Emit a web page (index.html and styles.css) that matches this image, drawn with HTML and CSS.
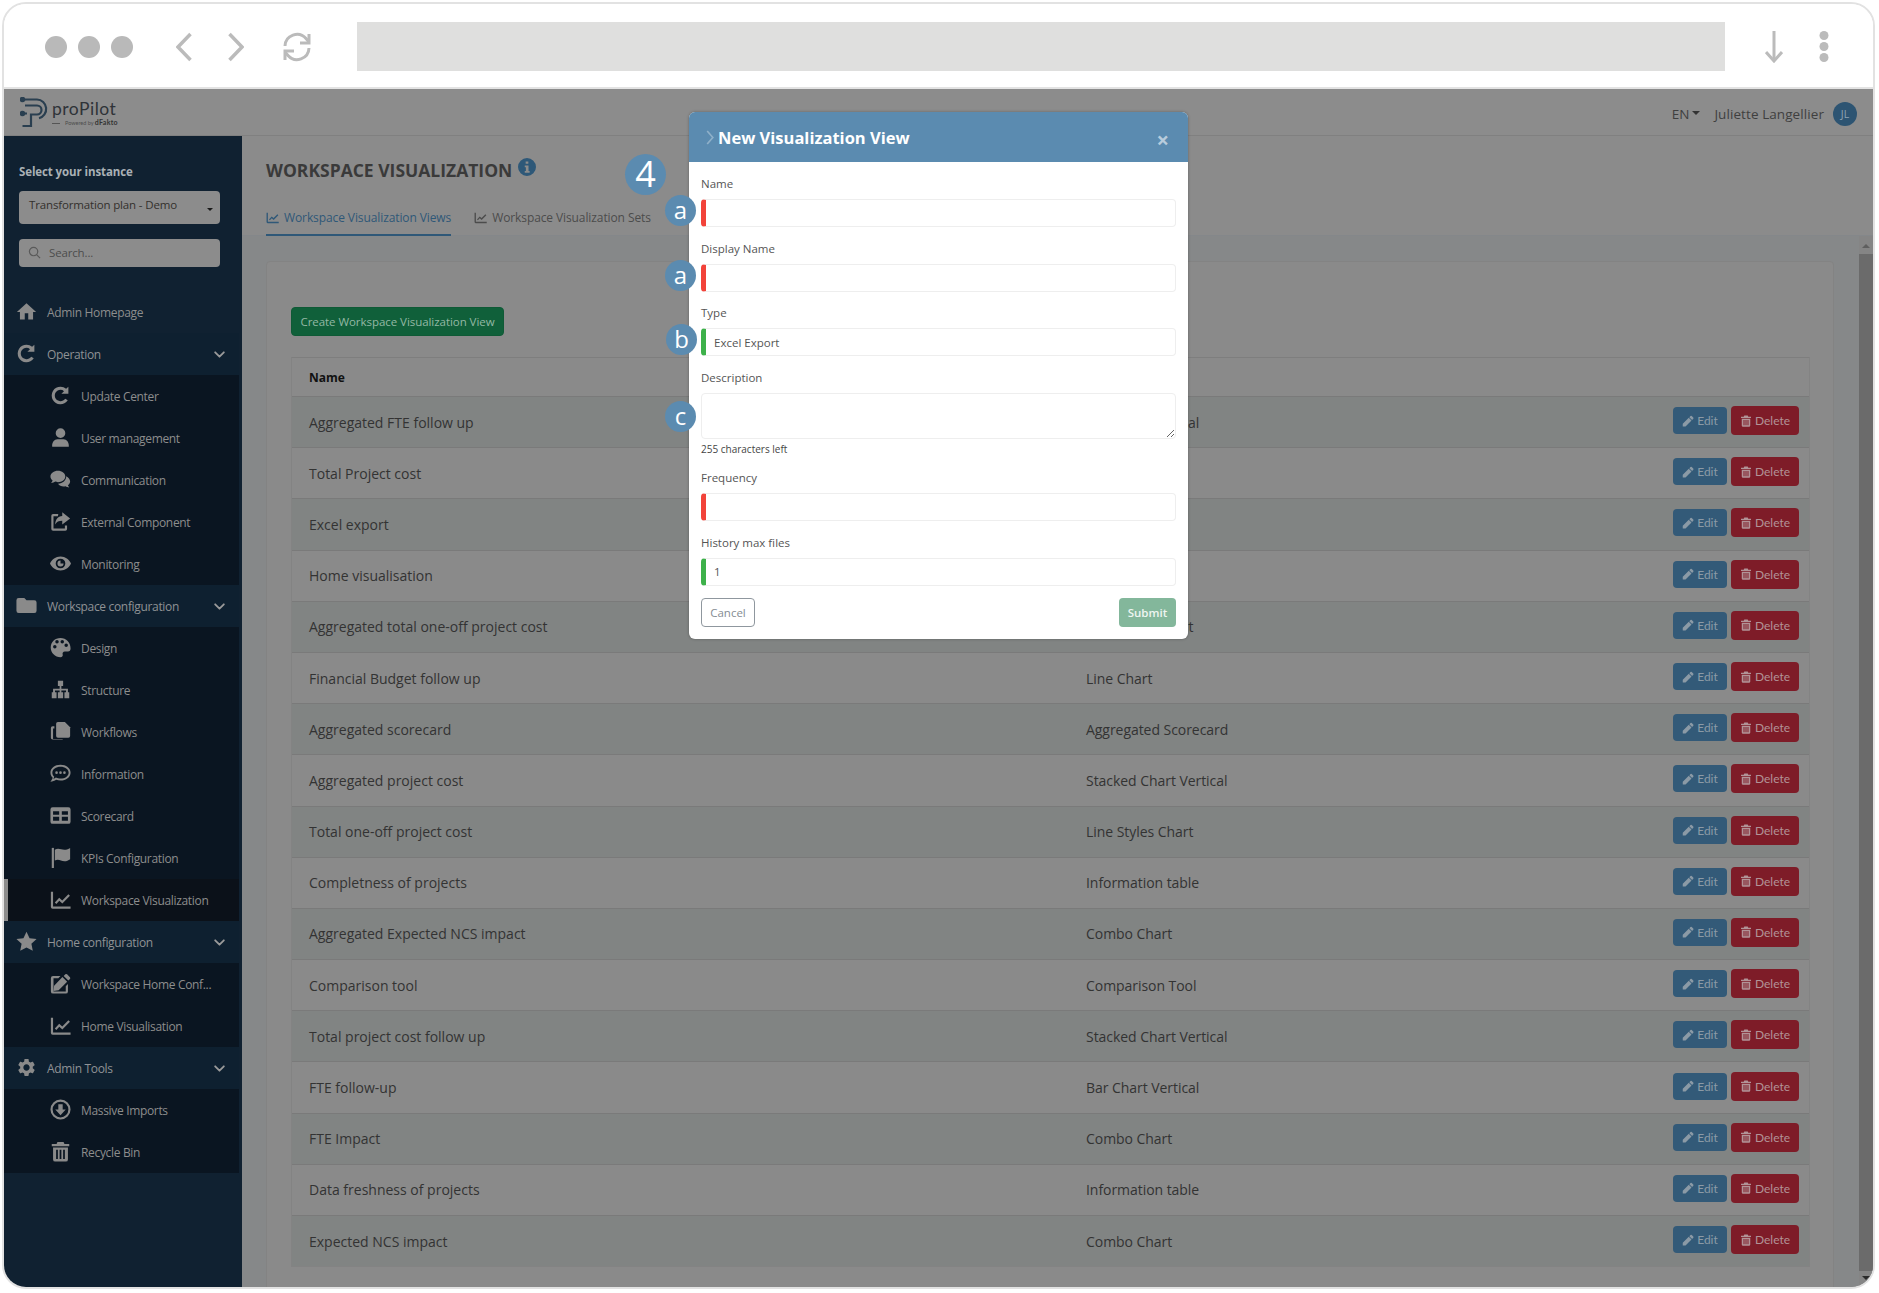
FILE: index.html
```html
<!DOCTYPE html>
<html lang="en">
<head>
<meta charset="utf-8">
<title>Workspace Visualization</title>
<link rel="stylesheet" href="styles.css">
</head>
<body>
<svg class="defs" aria-hidden="true">
  <symbol id="i-home" viewBox="0 0 24 24"><path d="M10 21v-7h4v7h5.500v-8.500H23L12 2.500 1 12.500h3.500V21z"/></symbol>
  <symbol id="i-redo" viewBox="0 0 24 24"><path d="M12 5.500a6.500 6.500 0 1 0 5.400 10.100l2.900 1.900A10 10 0 1 1 12 2c2.500 0 4.700.9 6.400 2.400L21 2v8h-8l3-3a6.500 6.500 0 0 0-4-1.500z"/></symbol>
  <symbol id="i-user" viewBox="0 0 24 24"><path d="M12 12.500a5.500 5.500 0 1 0 0-11 5.500 5.500 0 0 0 0 11zM2.500 22.500c-.5-5 2.500-8.500 6-8.500h7c3.500 0 6.500 3.500 6 8.500z"/></symbol>
  <symbol id="i-comments" viewBox="0 0 24 24"><path d="M9 2C4.500 2 .5 4.800.5 8.500c0 2 1.100 3.600 2.500 4.700-.3 1-1 2-1.800 2.800 2 0 3.600-.8 4.800-1.600 1 .3 2 .6 3 .6 4.700 0 8.500-3 8.500-6.500S13.700 2 9 2z"/><path d="M18.500 8.200c.2 4.600-4 8.300-9.300 8.600 1.300 2 3.800 3.200 6.300 3.200.8 0 1.500-.1 2.300-.3 1.100.7 2.500 1.300 4.200 1.300-.7-.7-1.300-1.600-1.500-2.400 1.400-1 2.500-2.600 2.500-4.300 0-2.700-1.900-5-4.500-6.100z"/></symbol>
  <symbol id="i-share" viewBox="0 0 24 24"><path d="M14 1.500l9 7-9 7v-4.300c-4 0-6.500 1-8 4.300 0-5.500 3-9.300 8-9.700z"/><path d="M9.500 3.500H3.500a2 2 0 0 0-2 2v15a2 2 0 0 0 2 2h14a2 2 0 0 0 2-2v-4h-2.500v3.500h-13v-14h5z"/></symbol>
  <symbol id="i-eye" viewBox="0 0 24 24"><path fill-rule="evenodd" d="M12 4C6.500 4 2 7.500 0 12c2 4.500 6.500 8 12 8s10-3.500 12-8c-2-4.500-6.500-8-12-8zm0 2.500a5.500 5.500 0 1 1 0 11 5.500 5.500 0 0 1 0-11zm0 2a3.500 3.500 0 1 0 3.500 3.500H12z"/></symbol>
  <symbol id="i-folder" viewBox="0 0 24 24"><path d="M9.500 3.500H3a2.500 2.500 0 0 0-2.500 2.500v12A2.500 2.500 0 0 0 3 20.500h18a2.500 2.500 0 0 0 2.500-2.500V8.500A2.500 2.500 0 0 0 21 6h-9z"/></symbol>
  <symbol id="i-palette" viewBox="0 0 24 24"><path fill-rule="evenodd" d="M12 1C5.500 1 .8 5.800.8 12S5.800 23 12 23c2 0 3-1.300 2.500-3-.5-2 .5-3.500 2.500-3.500h3.500c2 0 3-1.500 3-3.500C23.500 6 18.500 1 12 1zM5.500 13a2 2 0 1 1 0-4 2 2 0 0 1 0 4zM8 7.500a2 2 0 1 1 0-4 2 2 0 0 1 0 4zm6 0a2 2 0 1 1 0-4 2 2 0 0 1 0 4zm4.500 4a2 2 0 1 1 0-4 2 2 0 0 1 0 4z"/></symbol>
  <symbol id="i-sitemap" viewBox="0 0 24 24"><path d="M9 2h6v6h-2v3h7.500v4H22v7h-5.500v-7h1.800v-2H13v2h2v7H9v-7h2v-2H5.700v2h1.800v7H2v-7h1.500v-4H11V8H9z"/></symbol>
  <symbol id="i-copy" viewBox="0 0 24 24"><path d="M9 1h8l6 6v10a2 2 0 0 1-2 2H9a2 2 0 0 1-2-2V3a2 2 0 0 1 2-2z"/><path d="M5 6v2.500H3.500v12h11V21H3a2 2 0 0 1-2-2V8a2 2 0 0 1 2-2z"/></symbol>
  <symbol id="i-chat" viewBox="0 0 24 24"><path fill-rule="evenodd" d="M12 2C5.600 2 .5 6 .5 11c0 2.200 1 4.200 2.600 5.800-.5 1.700-1.600 3.200-2.800 4.700 2.700-.2 5-1 6.700-2.300 1.500.5 3.200.8 5 .8 6.400 0 11.500-4 11.500-9S18.400 2 12 2zm0 2.200c5.200 0 9.300 3 9.300 6.800s-4.100 6.800-9.300 6.800c-2 0-3.300-.4-5.200-1.100-1 .8-1.800 1.300-3 1.600.6-1 .9-2 1-3C3.700 14.800 2.700 13 2.700 11c0-3.800 4.100-6.800 9.300-6.800zM7.500 9.500a1.500 1.500 0 1 0 0 3 1.500 1.500 0 0 0 0-3zm4.500 0a1.500 1.500 0 1 0 0 3 1.500 1.500 0 0 0 0-3zm4.500 0a1.500 1.500 0 1 0 0 3 1.500 1.500 0 0 0 0-3z"/></symbol>
  <symbol id="i-table" viewBox="0 0 24 24"><path fill-rule="evenodd" d="M3 2.500h18A2.500 2.500 0 0 1 23.500 5v14a2.500 2.500 0 0 1-2.500 2.500H3A2.500 2.500 0 0 1 .5 19V5A2.500 2.500 0 0 1 3 2.500zM3.500 7v4h7V7zm10 0v4h7V7zm-10 6.500v4.500h7v-4.500zm10 0v4.500h7v-4.500z"/></symbol>
  <symbol id="i-flag" viewBox="0 0 24 24"><path d="M2 1h2.500v23H2z"/><path d="M5.500 3c5-2.500 8 1 12.500 0 2-.4 4-1.300 5-2v13c-2 1.500-4 2.300-6.500 2.300-4 0-6.500-3-11-.8z"/></symbol>
  <symbol id="i-chart" viewBox="0 0 24 24"><path d="M1 3h2.500v17H23.500v2.500H3a2 2 0 0 1-2-2z"/><path d="M5.500 15.500l5-5.500 3.500 3L21 6l1.800 1.800-8.700 8.700-3.500-3-3.300 3.600z"/></symbol>
  <symbol id="i-star" viewBox="0 0 24 24"><path d="M12 .8l3.500 7.400 8 1-5.900 5.500 1.600 8L12 18.800l-7.200 3.900 1.600-8L.5 9.200l8-1z"/></symbol>
  <symbol id="i-edit" viewBox="0 0 24 24"><path d="M19.500 1.500l3.300 3.300a1.500 1.500 0 0 1 0 2L21 8.700 15.600 3.300l1.900-1.800a1.500 1.500 0 0 1 2 0zM14.200 4.700l5.400 5.400-9.700 9.700-6 .8.800-6z"/><path d="M3.500 3.500H12L9.500 6H4v15h14v-6l2.500-2.500V21a2.500 2.500 0 0 1-2.500 2.500H3.500A2.500 2.500 0 0 1 1 21V6a2.500 2.500 0 0 1 2.500-2.500z"/></symbol>
  <symbol id="i-gear" viewBox="0 0 24 24"><path fill-rule="evenodd" d="M19.140 12.940c.04-.3.060-.61.060-.94 0-.32-.020-.64-.070-.94l2.030-1.580c.18-.14.230-.41.120-.61l-1.920-3.320c-.12-.22-.37-.29-.59-.22l-2.390.96c-.5-.38-1.030-.7-1.620-.94l-.36-2.540c-.04-.24-.24-.41-.48-.41h-3.840c-.24 0-.43.17-.47.41l-.36 2.540c-.59.24-1.130.57-1.620.94l-2.390-.96c-.22-.08-.47 0-.59.22L2.740 8.870c-.12.21-.08.47.12.61l2.030 1.580c-.05.3-.09.63-.09.94s.02.64.07.94l-2.030 1.580c-.18.14-.23.41-.12.61l1.920 3.320c.12.22.37.29.59.22l2.390-.96c.5.38 1.030.7 1.620.94l.36 2.540c.05.24.24.41.48.41h3.840c.24 0 .44-.17.47-.41l.36-2.540c.59-.24 1.130-.56 1.620-.94l2.390.96c.22.08.47 0 .59-.22l1.920-3.320c.12-.22.07-.47-.12-.61l-2.010-1.580zM12 15.600c-1.980 0-3.600-1.620-3.600-3.600s1.620-3.600 3.600-3.600 3.600 1.620 3.600 3.600-1.620 3.600-3.600 3.600z"/></symbol>
  <symbol id="i-import" viewBox="0 0 24 24"><path fill-rule="evenodd" d="M12 .5a11.500 11.500 0 1 1 0 23 11.500 11.500 0 0 1 0-23zm0 2.500a9 9 0 1 0 0 18 9 9 0 0 0 0-18zm-2.500 3h5v6H18l-6 6.500L6 12h3.500z"/></symbol>
  <symbol id="i-trash" viewBox="0 0 24 24"><path fill-rule="evenodd" d="M8.500 1h7l1 2.500H22V6H2V3.500h5.500zM3.500 7.500h17V21a2.500 2.500 0 0 1-2.500 2.500H6A2.500 2.500 0 0 1 3.500 21zM7 10v10.500h2V10zm4 0v10.500h2V10zm4 0v10.500h2V10z"/></symbol>
  <symbol id="i-pencil" viewBox="0 0 24 24"><path d="M1.500 17.500V23H7L19 11l-5.500-5.500zM22.500 7.500a1.800 1.800 0 0 0 0-2.500l-3-3a1.800 1.800 0 0 0-2.500 0l-2.300 2.300 5.500 5.500z"/></symbol>
  <symbol id="i-chevdown" viewBox="0 0 24 24"><path d="M4 8l8 8 8-8" fill="none" stroke="currentColor" stroke-width="3.400" stroke-linecap="round" stroke-linejoin="round"/></symbol>
  <symbol id="i-info" viewBox="0 0 24 24"><path fill-rule="evenodd" d="M12 0a12 12 0 1 1 0 24 12 12 0 0 1 0-24zm-1.800 4.500v3.200h3.600V4.500zM9 10v2.200h1.500v5H9v2.300h6.500v-2.300H14V10z"/></symbol>
</svg>

<div class="window">
  <div class="chrome">
    <span class="dot"></span><span class="dot"></span><span class="dot"></span>
    <svg class="ch-back" viewBox="0 0 16 30"><path d="M14.500 2L2 15l12.500 13" fill="none" stroke="#bbb" stroke-width="3.500"/></svg>
    <svg class="ch-fwd" viewBox="0 0 16 30"><path d="M1.500 2L14 15 1.500 28" fill="none" stroke="#bbb" stroke-width="3.500"/></svg>
    <svg class="ch-reload" viewBox="0 0 30 30" fill="none" stroke="#bbb" stroke-width="3"><path d="M3 14a12 12 0 0 1 21-7.500L27 10"/><path d="M27 2v9h-9"/><path d="M27 16a12 12 0 0 1-21 7.500L3 20"/><path d="M3 28v-9h9"/></svg>
    <div class="urlbar"></div>
    <svg class="ch-down" viewBox="0 0 18 32" fill="none" stroke="#bbb" stroke-width="3"><path d="M9 0v30"/><path d="M1 21l8 9 8-9"/></svg>
    <svg class="ch-menu" viewBox="0 0 10 31" fill="#bbb"><circle cx="5" cy="4.500" r="4.500"/><circle cx="5" cy="15.500" r="4.500"/><circle cx="5" cy="26.500" r="4.500"/></svg>
  </div>

  <header class="topbar">
    <div class="brand">
      <svg class="brand-mark" viewBox="0 0 28 31" fill="none" stroke="#2a3f50" stroke-width="2.200"><path d="M2 2.500h15a9.500 9.500 0 0 1 2 18.700"/><path d="M5 8.500h12a4.500 4.500 0 0 1 0 9h-6V29H2.500"/><path d="M2 16.500h5"/><circle cx="2.500" cy="2.500" r="1.700" fill="#2a3f50"/><circle cx="2.500" cy="16.500" r="1.700" fill="#2a3f50"/></svg>
      <div class="brand-text">
        <span class="brand-name">proPilot</span>
        <span class="brand-sub"><i class="brand-rule"></i>Powered by <b>dFakto</b></span>
      </div>
    </div>
    <div class="user">
      <span class="lang">EN</span><span class="caret"></span>
      <span class="user-name">Juliette Langellier</span>
      <span class="avatar">JL</span>
    </div>
  </header>

  <div class="body">
    <aside class="sidebar">
      <div class="inst-label">Select your instance</div>
      <div class="inst-select">Transformation plan - Demo<span class="caret dark"></span></div>
      <div class="inst-search">
        <svg class="search-ic" viewBox="0 0 14 14" fill="none" stroke="#5a5a5a" stroke-width="1.300"><circle cx="6" cy="6" r="4.500"/><path d="M9.500 9.500L13 13"/></svg>
        Search...
      </div>
      <nav class="menu">
        <a class="item top"><svg class="ic"><use href="#i-home"/></svg>Admin Homepage</a>
        <a class="item group"><svg class="ic"><use href="#i-redo"/></svg>Operation<svg class="chev"><use href="#i-chevdown"/></svg></a>
        <a class="item sub"><svg class="ic"><use href="#i-redo"/></svg>Update Center</a>
        <a class="item sub"><svg class="ic"><use href="#i-user"/></svg>User management</a>
        <a class="item sub"><svg class="ic"><use href="#i-comments"/></svg>Communication</a>
        <a class="item sub"><svg class="ic"><use href="#i-share"/></svg>External Component</a>
        <a class="item sub"><svg class="ic"><use href="#i-eye"/></svg>Monitoring</a>
        <a class="item group"><svg class="ic"><use href="#i-folder"/></svg>Workspace configuration<svg class="chev"><use href="#i-chevdown"/></svg></a>
        <a class="item sub"><svg class="ic"><use href="#i-palette"/></svg>Design</a>
        <a class="item sub"><svg class="ic"><use href="#i-sitemap"/></svg>Structure</a>
        <a class="item sub"><svg class="ic"><use href="#i-copy"/></svg>Workflows</a>
        <a class="item sub"><svg class="ic"><use href="#i-chat"/></svg>Information</a>
        <a class="item sub"><svg class="ic"><use href="#i-table"/></svg>Scorecard</a>
        <a class="item sub"><svg class="ic"><use href="#i-flag"/></svg>KPIs Configuration</a>
        <a class="item sub active"><svg class="ic"><use href="#i-chart"/></svg>Workspace Visualization</a>
        <a class="item group"><svg class="ic"><use href="#i-star"/></svg>Home configuration<svg class="chev"><use href="#i-chevdown"/></svg></a>
        <a class="item sub"><svg class="ic"><use href="#i-edit"/></svg>Workspace Home Conf...</a>
        <a class="item sub"><svg class="ic"><use href="#i-chart"/></svg>Home Visualisation</a>
        <a class="item group"><svg class="ic"><use href="#i-gear"/></svg>Admin Tools<svg class="chev"><use href="#i-chevdown"/></svg></a>
        <a class="item sub"><svg class="ic"><use href="#i-import"/></svg>Massive Imports</a>
        <a class="item sub"><svg class="ic"><use href="#i-trash"/></svg>Recycle Bin</a>
      </nav>
    </aside>

    <main class="main">
      <div class="page-head">
        <h1 class="page-title">WORKSPACE VISUALIZATION<svg class="info"><use href="#i-info"/></svg></h1>
        <div class="tabs">
          <a class="tab on"><svg class="tab-ic"><use href="#i-chart"/></svg>Workspace Visualization Views</a>
          <a class="tab"><svg class="tab-ic"><use href="#i-chart"/></svg>Workspace Visualization Sets</a>
        </div>
      </div>
      <div class="scroller">
        <div class="content">
          <section class="panel">
            <button class="create">Create Workspace Visualization View</button>
            <div class="table">
              <div class="row head"><span class="c-name">Name</span></div>
              <div class="row"><span class="c-name">Aggregated FTE follow up</span><span class="c-type">Bar Chart Vertical</span><span class="acts"><button class="edit"><svg class="b-ic"><use href="#i-pencil"/></svg>Edit</button><button class="del"><svg class="b-ic"><use href="#i-trash"/></svg>Delete</button></span></div>
              <div class="row"><span class="c-name">Total Project cost</span><span class="c-type">Line Chart</span><span class="acts"><button class="edit"><svg class="b-ic"><use href="#i-pencil"/></svg>Edit</button><button class="del"><svg class="b-ic"><use href="#i-trash"/></svg>Delete</button></span></div>
              <div class="row"><span class="c-name">Excel export</span><span class="c-type">Excel Export</span><span class="acts"><button class="edit"><svg class="b-ic"><use href="#i-pencil"/></svg>Edit</button><button class="del"><svg class="b-ic"><use href="#i-trash"/></svg>Delete</button></span></div>
              <div class="row"><span class="c-name">Home visualisation</span><span class="c-type">Line Chart</span><span class="acts"><button class="edit"><svg class="b-ic"><use href="#i-pencil"/></svg>Edit</button><button class="del"><svg class="b-ic"><use href="#i-trash"/></svg>Delete</button></span></div>
              <div class="row"><span class="c-name">Aggregated total one-off project cost</span><span class="c-type">Line Styles Chart</span><span class="acts"><button class="edit"><svg class="b-ic"><use href="#i-pencil"/></svg>Edit</button><button class="del"><svg class="b-ic"><use href="#i-trash"/></svg>Delete</button></span></div>
              <div class="row"><span class="c-name">Financial Budget follow up</span><span class="c-type">Line Chart</span><span class="acts"><button class="edit"><svg class="b-ic"><use href="#i-pencil"/></svg>Edit</button><button class="del"><svg class="b-ic"><use href="#i-trash"/></svg>Delete</button></span></div>
              <div class="row"><span class="c-name">Aggregated scorecard</span><span class="c-type">Aggregated Scorecard</span><span class="acts"><button class="edit"><svg class="b-ic"><use href="#i-pencil"/></svg>Edit</button><button class="del"><svg class="b-ic"><use href="#i-trash"/></svg>Delete</button></span></div>
              <div class="row"><span class="c-name">Aggregated project cost</span><span class="c-type">Stacked Chart Vertical</span><span class="acts"><button class="edit"><svg class="b-ic"><use href="#i-pencil"/></svg>Edit</button><button class="del"><svg class="b-ic"><use href="#i-trash"/></svg>Delete</button></span></div>
              <div class="row"><span class="c-name">Total one-off project cost</span><span class="c-type">Line Styles Chart</span><span class="acts"><button class="edit"><svg class="b-ic"><use href="#i-pencil"/></svg>Edit</button><button class="del"><svg class="b-ic"><use href="#i-trash"/></svg>Delete</button></span></div>
              <div class="row"><span class="c-name">Completness of projects</span><span class="c-type">Information table</span><span class="acts"><button class="edit"><svg class="b-ic"><use href="#i-pencil"/></svg>Edit</button><button class="del"><svg class="b-ic"><use href="#i-trash"/></svg>Delete</button></span></div>
              <div class="row"><span class="c-name">Aggregated Expected NCS impact</span><span class="c-type">Combo Chart</span><span class="acts"><button class="edit"><svg class="b-ic"><use href="#i-pencil"/></svg>Edit</button><button class="del"><svg class="b-ic"><use href="#i-trash"/></svg>Delete</button></span></div>
              <div class="row"><span class="c-name">Comparison tool</span><span class="c-type">Comparison Tool</span><span class="acts"><button class="edit"><svg class="b-ic"><use href="#i-pencil"/></svg>Edit</button><button class="del"><svg class="b-ic"><use href="#i-trash"/></svg>Delete</button></span></div>
              <div class="row"><span class="c-name">Total project cost follow up</span><span class="c-type">Stacked Chart Vertical</span><span class="acts"><button class="edit"><svg class="b-ic"><use href="#i-pencil"/></svg>Edit</button><button class="del"><svg class="b-ic"><use href="#i-trash"/></svg>Delete</button></span></div>
              <div class="row"><span class="c-name">FTE follow-up</span><span class="c-type">Bar Chart Vertical</span><span class="acts"><button class="edit"><svg class="b-ic"><use href="#i-pencil"/></svg>Edit</button><button class="del"><svg class="b-ic"><use href="#i-trash"/></svg>Delete</button></span></div>
              <div class="row"><span class="c-name">FTE Impact</span><span class="c-type">Combo Chart</span><span class="acts"><button class="edit"><svg class="b-ic"><use href="#i-pencil"/></svg>Edit</button><button class="del"><svg class="b-ic"><use href="#i-trash"/></svg>Delete</button></span></div>
              <div class="row"><span class="c-name">Data freshness of projects</span><span class="c-type">Information table</span><span class="acts"><button class="edit"><svg class="b-ic"><use href="#i-pencil"/></svg>Edit</button><button class="del"><svg class="b-ic"><use href="#i-trash"/></svg>Delete</button></span></div>
              <div class="row"><span class="c-name">Expected NCS impact</span><span class="c-type">Combo Chart</span><span class="acts"><button class="edit"><svg class="b-ic"><use href="#i-pencil"/></svg>Edit</button><button class="del"><svg class="b-ic"><use href="#i-trash"/></svg>Delete</button></span></div>
            </div>
          </section>
        </div>
        <div class="scrollbar"><i class="arrow up"></i><i class="thumb"></i><i class="arrow down"></i></div>
      </div>
    </main>
  </div>

  <form class="modal">
    <div class="modal-head">
      <svg class="modal-chev" viewBox="0 0 8 16"><path d="M1 1l6 7-6 7" fill="none" stroke="#8fb0c9" stroke-width="1.800"/></svg>
      <span class="modal-title">New Visualization View</span>
      <span class="modal-close">×</span>
    </div>
    <div class="modal-body">
      <div class="field"><label class="lbl">Name</label><input class="inp bad"></div>
      <div class="field"><label class="lbl">Display Name</label><input class="inp bad"></div>
      <div class="field"><label class="lbl">Type</label><input class="inp ok" value="Excel Export"></div>
      <div class="field tight"><label class="lbl">Description</label><textarea class="area"></textarea><div class="hint">255 characters left</div></div>
      <div class="field"><label class="lbl">Frequency</label><input class="inp bad"></div>
      <div class="field last"><label class="lbl">History max files</label><input class="inp ok" value="1"></div>
      <div class="modal-foot"><button type="button" class="cancel">Cancel</button><button type="button" class="submit">Submit</button></div>
    </div>
  </form>

  <span class="badge big b-four">4</span>
  <span class="badge b-a1">a</span>
  <span class="badge b-a2">a</span>
  <span class="badge b-b">b</span>
  <span class="badge b-c">c</span>
</div>
</body>
</html>
```
FILE: styles.css
```css
* { box-sizing: border-box; }
html, body { margin: 0; padding: 0; height: 100%; background: #fff; overflow: hidden; }
body { font-family: "Open Sans", "Noto Sans", sans-serif; color: #333; }
.defs { position: absolute; width: 0; height: 0; }

.window {
  position: relative;
  height: 1287px;
  margin: 2px 4px 0 2px;
  border: 2px solid #e2e2e2;
  border-radius: 24px;
  overflow: hidden;
  display: flex;
  flex-direction: column;
  background: #fff;
}

/* browser chrome */
.chrome {
  flex: none;
  height: 85px;
  padding: 4px 44px 2px 41px;
  display: flex;
  align-items: center;
  background: #fff;
  border-bottom: 2px solid #e3e3e3;
}
.dot { width: 22px; height: 22px; border-radius: 50%; background: #b9b9b9; margin-right: 11px; flex: none; }
.ch-back { width: 16px; height: 30px; margin-left: 32px; flex: none; }
.ch-fwd { width: 16px; height: 30px; margin-left: 36px; flex: none; }
.ch-reload { width: 30px; height: 30px; margin-left: 38px; flex: none; }
.urlbar { flex: 1; height: 49px; margin-left: 45px; background: #dfdfde; }
.ch-down { width: 18px; height: 32px; margin-left: 40px; flex: none; }
.ch-menu { width: 10px; height: 31px; margin-left: 36px; flex: none; }

/* top bar */
.topbar {
  flex: none;
  height: 47px;
  display: flex;
  align-items: center;
  justify-content: space-between;
  background: #8c8c8c;
  border-bottom: 1px solid #808080;
  padding: 0 16px;
}
.brand { display: flex; align-items: center; gap: 4px; }
.brand-mark { width: 28px; height: 31px; }
.brand-text { display: flex; flex-direction: column; margin-top: 2px; }
.brand-name { font-family: Lato, sans-serif; font-size: 17.500px; line-height: 19px; letter-spacing: .5px; color: #2f3338; }
.brand-sub { font-family: Lato, sans-serif; font-size: 5.500px; line-height: 9px; color: #4c4c4c; }
.brand-sub b { font-size: 7px; color: #333; letter-spacing: .3px; }
.brand-rule { display: inline-block; width: 8px; height: 1px; background: #555; vertical-align: middle; margin-right: 5px; }
.user { display: flex; align-items: center; margin-top: 3px; font-size: 13.500px; color: #3f3f3f; }
.lang { font-size: 13.500px; }
.caret { width: 0; height: 0; border: 4px solid transparent; border-top-color: #333; border-bottom: 0; margin: -2px 0 0 3px; }
.user-name { margin: 0 9px 0 14px; letter-spacing: .08px; }
.avatar { width: 24px; height: 24px; border-radius: 50%; background: #2d5472; color: #8fa3b3; font-size: 10.500px; display: flex; align-items: center; justify-content: center; }

/* sidebar */
.body { flex: 1; min-height: 0; display: flex; }
.sidebar { flex: none; width: 238px; background: #102131; padding: 27px 0 0; }
.inst-label { margin: 0 15px; height: 18px; font-size: 11.500px; line-height: 18px; font-weight: 700; letter-spacing: -.1px; color: #a9b0b5; }
.inst-select, .inst-search { margin: 0 15px; width: 201px; background: #8c8c8c; border-radius: 4px; display: flex; align-items: center; font-size: 11.500px; letter-spacing: -.15px; }
.inst-select { position: relative; margin-top: 10px; height: 33px; padding: 0 10px 6px; color: #33302c; }
.caret.dark { position: absolute; right: 7px; top: 17px; border-width: 3.500px; border-bottom: 0; border-top-color: #1a1a1a; margin: 0; }
.inst-search { margin-top: 15px; height: 28px; padding: 0 9px 1px; color: #4c4c4c; gap: 8px; }
.search-ic { width: 13px; height: 13px; }
.menu { margin: 24px 3px 0 0; display: flex; flex-direction: column; }
.item { height: 42px; position: relative; display: flex; align-items: center; font-size: 12px; letter-spacing: -.33px; color: #8d8d8d; fill: #8a8a8a; }
.item.top, .item.group { padding-left: 43px; }
.item.group { background: #0e2030; color: #8f9295; }
.item.sub { padding-left: 77px; background: #0a1521; }
.item.active { background: #0b1119; }
.item.active::before { content: ""; position: absolute; left: 0; top: 0; width: 4px; height: 42px; background: #8c8c8c; }
.ic { position: absolute; width: 21px; height: 21px; top: 10px; left: 12px; }
.sub .ic { left: 46px; }
.chev { position: absolute; right: 13px; top: 15px; width: 13px; height: 13px; color: #9a9a9a; }

/* main */
.main { flex: 1; min-width: 0; display: flex; flex-direction: column; background: #8b8b8b; }
.page-head { flex: none; padding-top: 20px; background: #8b8b8b; }
.page-title { display: flex; align-items: flex-start; margin: 0 0 0 24px; height: 28px; font-size: 17.500px; line-height: 28px; font-weight: 700; color: #3a3a3a; }
.info { width: 18px; height: 18px; margin: 2px 0 0 6px; fill: #2e5878; }
.tabs { display: flex; gap: 23px; margin-top: 16px; padding-left: 24px; height: 36px; border-bottom: 1px solid #84878a; }
.tab { display: flex; align-items: center; height: 36px; font-size: 12px; letter-spacing: -.1px; color: #4c4c4c; fill: #4c4c4c; border-bottom: 2px solid transparent; }
.tab.on { color: #2f5878; fill: #2f5878; border-bottom-color: #2f5878; }
.tab-ic { width: 13px; height: 13px; margin-right: 5px; }
.scroller { flex: 1; min-height: 0; display: flex; background: #868889; overflow: hidden; }
.content { flex: 1; min-width: 0; padding: 25px 25.500px 0 23.500px; }
.panel { background: #8a8a8a; border: 1px solid #838383; border-radius: 4px; padding: 45px 22.500px 0 24.500px; height: 1100px; }
.create { display: block; height: 29px; width: 213px; padding: 0; font: 11.500px "Open Sans", sans-serif; letter-spacing: -.05px; color: #93b8a4; background: #10603a; border: 1px solid #0f5a36; border-radius: 4px; }
.table { margin-top: 21px; border: 1px solid #838383; border-top-color: #7e7e7e; }
.row { height: 51.200px; display: flex; align-items: center; font-size: 14px; color: #333; border-top: 1px solid #7a7a7a; background: #8a8a8a; padding-left: 17px; }
.row:nth-child(even) { background: #818483; }
.row.head { height: 38px; border-top: 0; font-size: 12px; font-weight: 700; color: #111; }
.c-name { width: 777px; flex: none; }
.c-type { flex: 1; letter-spacing: -.05px; }
.acts { display: flex; align-items: center; gap: 4px; margin: 0 10px 3px 0; }
.edit, .del { display: flex; align-items: center; justify-content: center; padding: 0; border: 0; border-radius: 4px; font: 12px Lato, sans-serif; }
.edit { width: 54px; height: 27px; background: #335a78; color: #8b9aa6; fill: #8b9aa6; }
.del { width: 68px; height: 29px; background: #7e1c28; color: #b29397; fill: #b29397; }
.b-ic { width: 12px; height: 14px; margin-right: 3px; }

.scrollbar { flex: none; width: 14px; background: #858585; display: flex; flex-direction: column; align-items: center; }
.thumb { display: block; width: 100%; height: 1017px; background: #6b6b6b; }
.arrow { display: block; width: 0; height: 0; border: 4px solid transparent; }
.arrow.up { border-top: 0; border-bottom: 4px solid #5f5f5f; margin: 8px 0 6px; }
.arrow.down { border-bottom: 0; border-top: 4px solid #2a2a2a; margin-top: 5px; }

/* modal */
.modal { position: absolute; left: 685px; top: 108px; width: 499px; height: 527px; background: #fff; border-radius: 6px; box-shadow: 0 0 3px rgba(0,0,0,.3); overflow: hidden; }
.modal-head { height: 50px; background: #5b8bb0; display: flex; align-items: center; padding-left: 17px; position: relative; }
.modal-chev { width: 8px; height: 15px; margin-right: 4px; }
.modal-title { font-size: 16.500px; font-weight: 700; color: #fff; }
.modal-close { position: absolute; right: 19px; top: 13px; font-size: 22px; line-height: 28px; font-weight: 700; color: #b8ccdc; }
.modal-body { padding: 14px 12px 0; }
.field { margin-bottom: 13.670px; }
.field.tight { margin-bottom: 14px; }
.field.last { margin-bottom: 12px; }
.lbl { display: block; height: 16px; line-height: 16px; margin-bottom: 7px; font-size: 11.500px; color: #555; }
.inp { display: block; width: 100%; height: 28px; padding: 0 9px 0 8px; font: 11.500px "Open Sans", sans-serif; color: #555; background: #fff; border: 1px solid #eee; border-left: 5px solid; border-radius: 4px; outline: 0; }
.inp.bad { border-left-color: #f2433a; }
.inp.ok { border-left-color: #3db14a; }
.area { display: block; width: 100%; height: 46px; border: 1px solid #eee; border-radius: 4px; outline: 0; resize: vertical; padding: 0; }
.hint { margin-top: 3px; height: 14px; line-height: 14px; font-size: 10px; color: #444; }
.modal-foot { display: flex; justify-content: space-between; }
.cancel, .submit { height: 29px; padding: 0; border-radius: 4px; font: 11.500px "Open Sans", sans-serif; }
.cancel { width: 54px; background: #fff; border: 1px solid #8f979e; color: #858c93; }
.submit { width: 57px; background: #83b79b; border: 0; color: #eef5f1; font-weight: 600; }

/* tutorial markers */
.badge { position: absolute; width: 31px; height: 31px; border-radius: 50%; background: #5b8bb0; color: #fff; font-size: 24px; line-height: 29px; text-align: center; }
.big { width: 41px; height: 41px; left: 621px; top: 150px; font-size: 36px; line-height: 40px; }
.b-a1 { left: 661px; top: 191px; }
.b-a2 { left: 661px; top: 256px; }
.b-b { left: 662px; top: 320px; }
.b-c { left: 661px; top: 397px; }
```
